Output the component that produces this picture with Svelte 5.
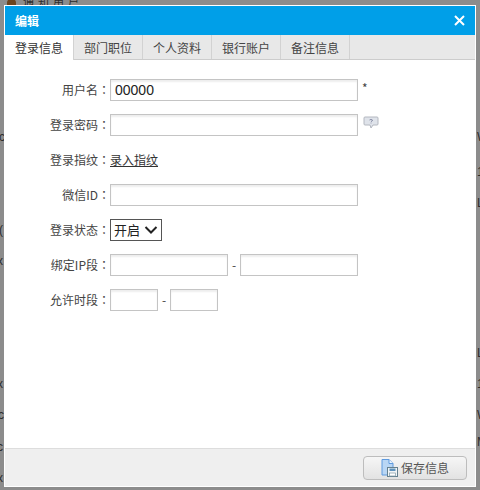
<script>
    const tabs = ["登录信息", "部门职位", "个人资料", "银行账户", "备注信息"];
    // bits of the list page that stick out around the modal
    const behind = [
        { text: "c", x: -1, y: 130 },
        { text: "(", x: -1, y: 223 },
        { text: "x", x: -3, y: 254 },
        { text: "x", x: -3, y: 377 },
        { text: "c", x: -2, y: 408 },
        { text: "c", x: -3, y: 440 },
        { text: "x", x: -3, y: 471 },
        { text: "W", x: 477, y: 130 },
        { text: "10", x: 477, y: 165 },
        { text: "L", x: 477, y: 196 },
        { text: "L", x: 477, y: 346 },
        { text: "10", x: 477, y: 377 },
        { text: "W", x: 477, y: 408 },
        { text: "M", x: 477, y: 435 }
    ];
    let active = 0;
</script>

<div class="page">
    <div class="behind">
        <span class="avatar"></span>
        <span class="top-text">通知用户</span>
        {#each behind as b}
            <span class="bit" style="left: {b.x}px; top: {b.y}px">{b.text}</span>
        {/each}
    </div>

    <div class="dialog">
        <div class="title">
            <span class="title-text">编辑</span>
            <svg class="close" width="11" height="11" viewBox="0 0 11 11">
                <path d="M1 1 L10 10 M10 1 L1 10" stroke="#fff" stroke-width="2" fill="none" />
            </svg>
        </div>

        <div class="tabs">
            {#each tabs as tab, i}
                <button class="tab" class:active={i === active} on:click={() => (active = i)}>{tab}</button>
            {/each}
        </div>

        <div class="form">
            <div class="row">
                <span class="label">用户名<span class="colon">：</span></span>
                <input class="field wide" value="00000" />
                <span class="star">*</span>
            </div>
            <div class="row">
                <span class="label">登录密码<span class="colon">：</span></span>
                <input class="field wide" type="password" />
                <svg class="hint" width="16" height="14" viewBox="0 0 16 14">
                    <path d="M2 1 H14 Q15 1 15 2 V8 Q15 9 14 9 H10 L8 12 L7 9 H2 Q1 9 1 8 V2 Q1 1 2 1 Z" fill="#dfe3ea" stroke="#b4b8c0" />
                    <path d="M6.5 4 Q8 2.8 9.5 4 Q9.5 5.2 8 5.6 M8 6.6 V7.4" stroke="#8a8fa8" fill="none" />
                </svg>
            </div>
            <div class="row">
                <span class="label">登录指纹<span class="colon">：</span></span>
                <span class="link">录入指纹</span>
            </div>
            <div class="row">
                <span class="label">微信ID<span class="colon">：</span></span>
                <input class="field wide" />
            </div>
            <div class="row">
                <span class="label">登录状态<span class="colon">：</span></span>
                <div class="select">
                    <span>开启</span>
                    <svg width="14" height="8" viewBox="0 0 14 8">
                        <path d="M1.5 1 L7 6.5 L12.5 1" stroke="#222" stroke-width="2" fill="none" />
                    </svg>
                </div>
            </div>
            <div class="row">
                <span class="label">绑定IP段<span class="colon">：</span></span>
                <input class="field mid" />
                <span class="dash">-</span>
                <input class="field mid" />
            </div>
            <div class="row">
                <span class="label">允许时段<span class="colon">：</span></span>
                <input class="field small" />
                <span class="dash">-</span>
                <input class="field small" />
            </div>
        </div>

        <div class="footer">
            <button class="save">
                <svg width="17" height="18" viewBox="0 0 17 18">
                    <path d="M1 .5 H8 L12 4.5 V16 H1 Z" fill="#b9d6f4" stroke="#5f9ade" />
                    <path d="M8 .5 V4.5 H12" fill="#eef6fd" stroke="#5f9ade" />
                    <rect x="6.5" y="8.5" width="10" height="9" fill="#f1f4f6" stroke="#64808f" />
                    <rect x="8.5" y="9.5" width="6" height="2.5" fill="#5f93bd" />
                    <rect x="8.5" y="14" width="6" height="3" fill="#fff" stroke="#7f97a4" stroke-width="0.7" />
                </svg>
                <span>保存信息</span>
            </button>
        </div>
    </div>
</div>

<style>
    :global(body) {
        margin: 0;
        background: #8c8c8c;
    }

    .page {
        position: relative;
        height: 490px;
        padding: 5px 4px 3px 4px;
        box-sizing: border-box;
        overflow: hidden;
        font-family: "Noto Sans CJK SC", "Liberation Sans", sans-serif;
        font-size: 12px;
        color: #444;
    }

    .behind {
        position: absolute;
        inset: 0;
        color: #2c2c2c;
    }

    .avatar {
        position: absolute;
        left: 7px;
        top: -1px;
        width: 9px;
        height: 6px;
        border-radius: 4px 4px 0 0;
        background: #6b4420;
    }

    .top-text {
        position: absolute;
        left: 23px;
        top: -7px;
        letter-spacing: 4px;
        font-size: 11px;
    }

    .bit {
        position: absolute;
        font-family: "Liberation Sans", sans-serif;
        font-size: 12px;
    }

    .dialog {
        position: relative;
        height: 100%;
        display: flex;
        flex-direction: column;
        background: #fff;
        border: 1px solid #fff;
        box-sizing: border-box;
    }

    .title {
        height: 29px;
        flex: none;
        display: flex;
        align-items: center;
        justify-content: space-between;
        padding: 0 10px;
        background: #009fe8;
        color: #fff;
        font-weight: bold;
    }

    .tabs {
        height: 25px;
        flex: none;
        display: flex;
        background: #e8e8e8;
        border-bottom: 1px solid #ccc;
        box-sizing: border-box;
    }

    .tab {
        width: 69px;
        padding: 0;
        border: 0;
        border-right: 1px solid #d2d2d2;
        background: none;
        font: inherit;
        color: #444;
    }

    .tab.active {
        height: 25px;
        background: #fff;
        color: #333;
    }

    .form {
        flex: 1;
        padding-top: 12px;
    }

    .row {
        height: 35px;
        display: flex;
        align-items: center;
    }

    .label {
        width: 105px;
        text-align: right;
        flex: none;
    }

    /* JP cut of the font centres the full-width colon in its cell */
    .colon {
        font-family: "Noto Sans CJK JP", sans-serif;
    }

    .field {
        height: 22px;
        padding: 0 4px;
        box-sizing: border-box;
        border: 1px solid #c4c4c4;
        box-shadow: inset 0 2px 2px #eee;
        background: #fff;
        font-family: "Liberation Sans", sans-serif;
        font-size: 14px;
        color: #222;
        outline: none;
    }

    .wide { width: 248px; }
    .mid { width: 118px; }
    .small { width: 48px; }

    .star {
        margin-left: 4px;
        margin-top: -4px;
    }

    .hint {
        margin-left: 5px;
        margin-top: -3px;
    }

    .link {
        color: #333;
        text-decoration: underline;
    }

    .dash {
        width: 12px;
        text-align: center;
    }

    .select {
        width: 52px;
        height: 22px;
        box-sizing: border-box;
        border: 1px solid #555;
        display: flex;
        align-items: center;
        justify-content: space-between;
        padding: 0 3px;
        font-size: 13px;
        color: #222;
    }

    .footer {
        height: 38px;
        flex: none;
        display: flex;
        align-items: center;
        justify-content: flex-end;
        padding-right: 8px;
        background: #efefef;
        border-top: 1px solid #ddd;
        box-sizing: border-box;
    }

    .save {
        width: 104px;
        height: 24px;
        padding: 0;
        display: flex;
        align-items: center;
        justify-content: center;
        gap: 3px;
        border: 1px solid #bdbdbd;
        border-radius: 4px;
        background: linear-gradient(#f6f6f6, #e2e2e2);
        font: inherit;
        color: #555;
    }
</style>
